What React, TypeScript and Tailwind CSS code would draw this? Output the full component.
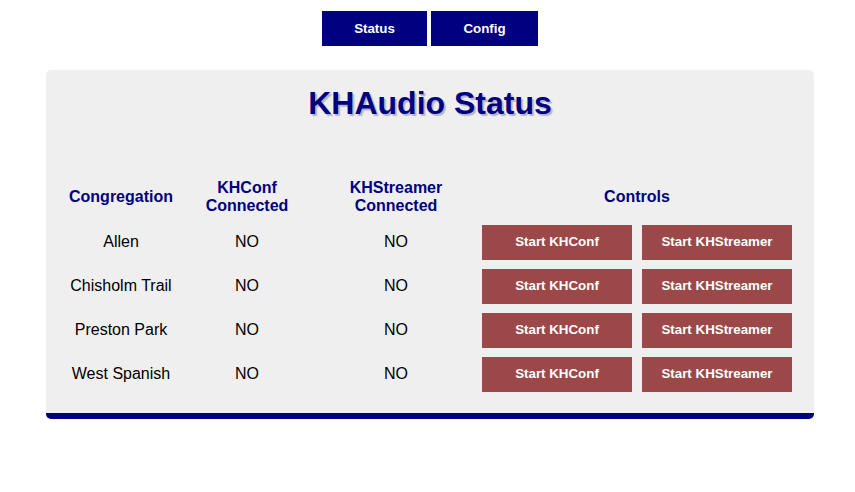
const rows = ["Allen", "Chisholm Trail", "Preston Park", "West Spanish"];

export default function App() {
  return (
    <div className="min-h-screen w-[860px] bg-white font-['Liberation_Sans',Arial,sans-serif]">
      <nav className="flex justify-center gap-[4px] pt-[11px]">
        <button className="h-[35px] w-[105px] bg-[#000080] text-[13.33px] font-bold text-white">
          Status
        </button>
        <button className="h-[35px] w-[107px] bg-[#000080] text-[13.33px] font-bold text-white">
          Config
        </button>
      </nav>

      <div className="mt-[24px] ml-[46px] w-[768px] rounded-[5px] border-b-[6px] border-[#000080] bg-[#efefef] pb-[17px]">
        <h1 className="pt-[15px] text-center text-[32px] leading-[37px] font-bold text-[#000080] [text-shadow:2px_2px_1px_#b4b4c8]">
          KHAudio Status
        </h1>

        <table className="mt-[51px] ml-[14px] border-collapse">
          <thead>
            <tr className="h-[47px] text-[16px] leading-[18px] font-bold text-[#000080]">
              <th className="w-[122px] text-center">Congregation</th>
              <th className="w-[130px] text-center">
                KHConf
                <br />
                Connected
              </th>
              <th className="w-[168px] text-center">
                KHStreamer
                <br />
                Connected
              </th>
              <th className="w-[314px] text-center">Controls</th>
            </tr>
          </thead>
          <tbody>
            {rows.map((name, index) => (
              <tr key={index} className="h-[44px] text-[16px] text-black">
                <td className="text-center">{name}</td>
                <td className="text-center">NO</td>
                <td className="text-center">NO</td>
                <td className="px-[2px]">
                  <div className="flex gap-[10px]">
                    <button className="h-[35px] w-[150px] bg-[#9c4848] text-[13.33px] font-bold text-white">
                      Start KHConf
                    </button>
                    <button className="h-[35px] w-[150px] bg-[#9c4848] text-[13.33px] font-bold text-white">
                      Start KHStreamer
                    </button>
                  </div>
                </td>
              </tr>
            ))}
          </tbody>
        </table>
      </div>
    </div>
  );
}
